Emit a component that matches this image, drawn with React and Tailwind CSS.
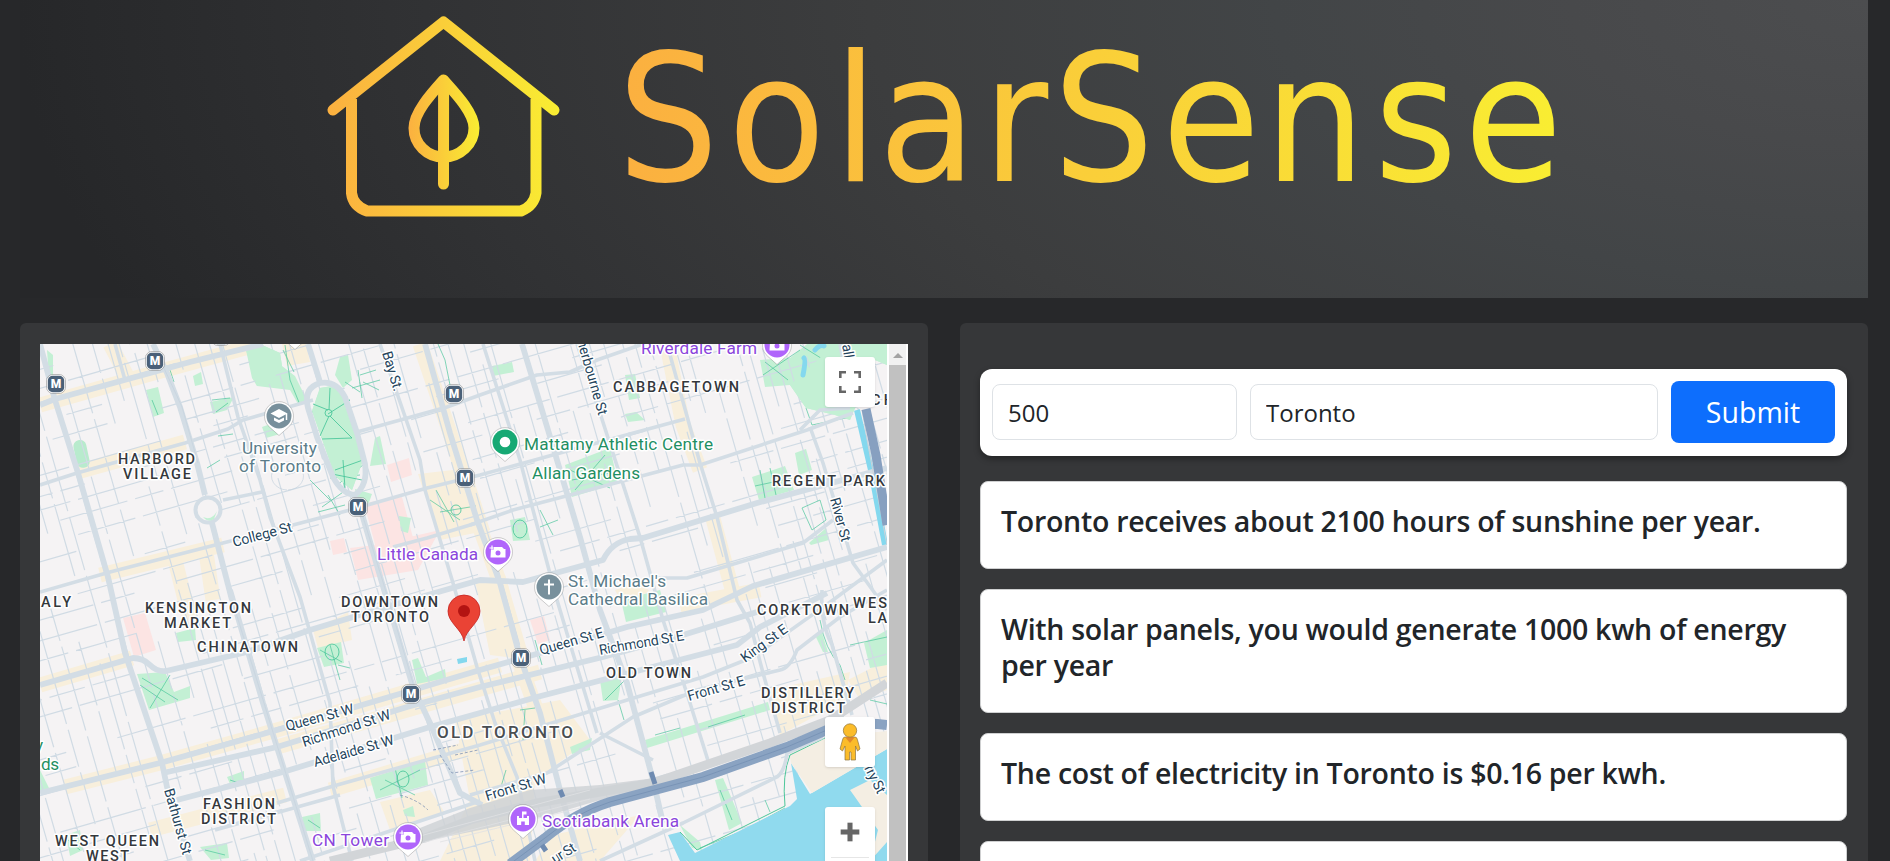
import { Plus } from 'lucide-react';

const facts = [
  'Toronto receives about 2100 hours of sunshine per year.',
  'With solar panels, you would generate 1000 kwh of energy per year',
  'The cost of electricity in Toronto is $0.16 per kwh.',
  'You would save $160 per year.',
];

// Wide arterial roads
const majorRoads = [
  'M40 405 L55 399 L150 373 L190 362 L263 344',
  'M40 344 L55 400 L78 473 L108 577 L125 653 L162 763 L167 787 L190 861',
  'M230 590 L263 703 L313 861',
  'M153 344 L167 373 L180 407 L197 463 L205 495',
  'M212 523 L232 600',
  'M308 344 L320 382',
  'M357 497 L387 600 L413 687 L430 723 L460 793 L482 805',
  'M320 383 Q303 388 308 408 L317 437 L333 477 Q342 494 355 495 Q368 485 365 464 L357 433 L345 397 Q336 380 320 383',
  'M425 344 L450 433 L477 520 L500 583 L520 657 L540 713 L560 790 L580 861',
  'M522 344 L548 430 L580 537 L600 610 L627 683 L653 780 L663 823',
  'M40 685 L133 658 Q143 658 150 665 Q157 672 166 671 L247 652 L310 630 L393 605 L480 580 L523 582 L603 560 Q612 542 630 539 L643 538 L757 503 L887 468',
  'M40 793 L160 763 L277 730 L413 690 L480 670 L540 653 L627 627 L703 610 L753 586 L887 547',
  'M163 773 L277 747 L407 707 L480 687 L603 657 L683 635 L757 612',
  'M177 800 L283 772 L430 727 L480 713 L537 697 L737 645 L760 627 L827 593',
];

// Secondary through streets
const midRoads = [
  'M380 344 L420 460 L425 490 L453 583 L477 667 L495 723 L517 777 L535 861',
  'M220 344 L238 417 L260 480 L270 517 L300 597 L330 703 L333 786 L352 861',
  'M483 344 L520 460 L533 510 L557 600 L580 677 L597 733',
  'M577 344 L600 413 L640 537 L663 620 L690 703 L710 767',
  'M667 344 L700 463 L717 517 L737 600 L750 623 L763 673 L780 733',
  'M810 427 L823 463 L853 563 L887 610',
  'M40 485 L77 473 L185 443 L228 429 L243 420 L313 400',
  'M357 432 L447 407 L480 395 L537 375 L570 372 L597 360 L643 344',
  'M40 592 L110 572 L223 543 L293 525 L350 510 L427 488 L480 475 L560 453 L685 419',
  'M470 525 L513 510 L570 495 L683 465 L700 465 L807 430 L853 413',
  'M393 547 L427 538 L480 522',
  'M650 578 L687 578 L803 543 L833 520',
  'M277 803 L330 787 L480 745 L637 697 L703 677 L753 657 L833 600 L887 560',
  'M470 795 L547 773 L633 717 L697 690 L780 670 Q790 668 797 650 L840 617 L887 590',
  'M600 861 L683 823 L777 777 Q785 771 787 753 L823 737',
  'M822 590 Q820 622 832 645 L852 715',
  'M600 733 L653 760',
  'M215 830 L340 795 M300 861 L480 801',
  'M223 500 L262 492 M800 430 L820 410 L850 408',
  'M115 344 L125 380 M840 344 L850 400',
];

const parks = [
  '246,350 262,345 280,353 282,366 295,376 307,400 298,404 290,390 257,386 252,378',
  '320,388 338,385 350,408 365,455 352,490 335,476 312,411',
  '146,390 158,387 164,413 153,417',
  '193,376 201,372 203,384 195,386',
  '210,402 234,397 227,410 213,414',
  '340,357 348,355 352,380 343,388 335,375',
  '262,427 276,422 280,434 266,438',
  '355,489 372,494 368,505 358,503',
  '375,438 380,436 386,464 370,466',
  '399,516 411,518 408,533 401,531',
  '565,465 610,448 618,483 572,497',
  '625,375 635,374 640,398 629,400',
  '492,366 512,362 514,372 493,376',
  '625,414 636,412 645,420 628,422',
  '752,477 785,466 794,490 759,500',
  '795,453 806,449 812,470 799,475',
  '809,543 826,528 829,540 811,545',
  '760,360 790,358 812,340 887,344 887,365 875,360 850,420 835,415 806,408 790,385 765,387',
  '510,520 525,517 530,540 513,541',
  '621,600 660,590 666,612 626,622',
  '137,674 165,672 174,692 190,686 190,698 149,710',
  '317,648 341,642 344,663 324,667',
  '370,778 425,761 428,785 376,799',
  '412,660 418,658 426,677 445,669 446,678 417,684',
  '600,680 622,676 618,700 603,701',
  '570,747 592,738 590,750 572,754',
  '645,740 768,702 770,710 647,748',
  '715,780 723,778 742,823 729,830',
  '864,643 887,630 887,665 870,668',
  '815,635 821,630 828,652 823,652',
  '302,817 320,813 321,831 305,831',
  '227,777 244,771 244,781 230,784',
  '200,847 227,843 229,858 211,860',
  '66,835 80,830 83,850 70,856',
  '40,770 50,790 40,793',
  '176,633 195,628 196,640 178,642',
  '680,825 700,842 702,850 692,848',
  '403,810 413,806 415,817 405,816',
  '47,350 53,355 53,380 49,378',
];

const commercial = [
  'M40 405 L150 374 L260 344',
  'M110 344 L128 378',
  'M77 472 L185 442',
  'M100 575 L223 545 M205 545 L213 600 M175 560 L190 620',
  'M420 344 L450 433 L477 520 L500 583 L515 650 L540 720',
  'M40 685 L132 658',
  'M65 787 L160 763 L277 730 L413 690 L500 665',
  'M668 350 L683 425 L700 470',
  'M712 515 L735 600',
  'M277 747 L400 712 L540 672',
  'M150 830 L285 795',
  'M330 790 L480 745 L560 722',
  'M680 605 L760 590',
];

const greenPaths = [
  'M318 398 L358 440 M312 412 L350 400 M322 438 L338 390 M337 412 L328 387 M337 412 L352 438',
  'M337 485 L363 465 M330 478 L360 475 M345 490 L340 465',
  'M285 345 L290 380 L300 405 M283 350 L294 372',
  'M345 382 L360 392 M358 370 L362 398 M352 388 L380 380 M363 382 L379 390 M360 375 L376 370',
  'M310 480 L330 500 M322 507 L346 490 M318 512 L345 505 M328 495 L340 515',
  'M212 400 L230 398 M216 412 L228 403 M218 436 L233 434 M207 468 L220 460',
  'M430 500 L460 520 M436 490 L454 522 M440 512 L476 506',
  'M570 470 L610 488 M575 490 L605 455 M572 480 L615 472',
  'M763 375 L800 350 M765 362 L788 380 M806 408 L812 425 L850 417 M800 345 L832 365',
  'M760 470 L765 498 M770 468 L776 495 M755 486 L792 478',
  'M802 508 L820 500 L826 520 L812 530 Z M540 510 L553 535 M540 527 L558 520',
  'M140 685 L165 702 M150 708 L170 675 M142 678 L178 700',
  'M320 650 L342 662 M330 645 L340 680 M338 665 L350 668',
  'M380 790 L420 770 M385 780 L415 795 M395 768 L402 798',
  'M605 700 L625 680 M618 700 L624 720 M655 735 L680 728 M708 727 L745 715',
  'M820 620 Q825 650 840 665 L845 680 M850 645 L887 637 M870 700 L887 704',
  'M700 848 L745 830 L785 808 M765 800 L770 812 M720 790 L732 820',
  'M520 710 L535 708 M525 710 L523 740 M535 640 L542 665 M506 770 L500 790',
  'M230 780 L242 784 M205 850 L225 855 M308 820 L320 828 M68 840 L80 850',
  'M438 344 L445 360 L450 385 M152 400 L158 415 M170 370 L174 382',
];

// Small residential streets, laid out on the tilted city grid
function buildStreets() {
  let seed = 11;
  const rand = () => {
    seed = (seed * 16807) % 2147483647;
    return seed / 2147483647;
  };
  let d = '';
  for (let x = -520; x < 520; x += 10 + rand() * 9) {
    let y = -420;
    while (y < 420) {
      const len = 28 + rand() * 75;
      if (rand() > 0.26) {
        d += `M${x.toFixed(1)} ${y.toFixed(1)} v${len.toFixed(1)} `;
      }
      y += len + 6;
    }
  }
  for (let y = -420; y < 420; y += 13 + rand() * 9) {
    let x = -520;
    while (x < 520) {
      const len = 20 + rand() * 70;
      if (rand() > 0.45) {
        d += `M${x.toFixed(1)} ${y.toFixed(1)} h${len.toFixed(1)} `;
      }
      x += len + 8;
    }
  }
  return d;
}

const streets = buildStreets();

const areas = [
  ['HARBORD', 118, 464, 77],
  ['VILLAGE', 123, 479, 68],
  ['CABBAGETOWN', 613, 392, 126],
  ['REGENT PARK', 772, 486, 113],
  ['KENSINGTON', 145, 613, 106],
  ['MARKET', 164, 628, 67],
  ['CHINATOWN', 197, 652, 101],
  ['DOWNTOWN', 341, 607, 97],
  ['TORONTO', 351, 622, 78],
  ['ALY', 41, 607, 30],
  ['FASHION', 203, 809, 72],
  ['DISTRICT', 201, 824, 75],
  ['WEST QUEEN', 55, 846, 104],
  ['WEST', 86, 861, 43],
  ['OLD TOWN', 606, 678, 85],
  ['CORKTOWN', 757, 615, 92],
  ['WES', 853, 608, 34],
  ['LA', 868, 623, 19],
  ['DISTILLERY', 761, 698, 93],
  ['DISTRICT', 771, 713, 74],
  ['CH', 871, 405, 23],
];

const places = [
  ['University', 242, 454, 75, '#5b7c89'],
  ['of Toronto', 239, 472, 82, '#5b7c89'],
  ["St. Michael's", 568, 587, 98, '#5b7c89'],
  ['Cathedral Basilica', 568, 605, 140, '#5b7c89'],
  ['Little Canada', 377, 560, 101, '#8b45dc'],
  ['Riverdale Farm', 641, 354, 116, '#8b45dc'],
  ['CN Tower', 312, 846, 77, '#8b45dc'],
  ['Scotiabank Arena', 542, 827, 137, '#8b45dc'],
  ['Mattamy Athletic Centre', 524, 450, 189, '#1f8f63'],
  ['Allan Gardens', 532, 479, 108, '#1f8f63'],
  ['y', 35, 751, 8, '#1f8f63'],
  ['ds', 41, 770, 18, '#1f8f63'],
];

const streetNames = [
  ['College St', 234, 547, 61, -15],
  ['Bay St.', 382, 353, 41, 73],
  ['herbourne St', 577, 341, 78, 74],
  ['River St', 830, 499, 45, 75],
  ['Queen St W', 287, 731, 70, -15],
  ['Richmond St W', 304, 747, 92, -18],
  ['Adelaide St W', 315, 767, 83, -16],
  ['Bathurst St', 164, 790, 68, 74],
  ['Queen St E', 541, 655, 66, -16],
  ['Richmond St E', 600, 655, 86, -10],
  ['King St E', 745, 663, 54, -36],
  ['Front St E', 689, 701, 59, -16],
  ['Front St W', 487, 801, 63, -17],
  ['rry St', 864, 768, 30, 63],
  ['ur St', 555, 864, 26, -32],
  ['all', 842, 345, 14, 80],
];

const stations = [[56, 384], [155, 361], [221, 336], [454, 394], [465, 478], [358, 507], [411, 694], [521, 658]];

function Pin({ x, y, color, children }) {
  return (
    <g transform={`translate(${x} ${y})`}>
      <path d="M0 19.5 L-9 11.5 A14.5 14.5 0 1 1 9 11.5 Z" fill="#fff" stroke="#00000030" strokeWidth="1" />
      <circle r="12.5" fill={color} />
      {children}
    </g>
  );
}

function Camera() {
  return (
    <g fill="#fff">
      <path d="M-7 -3 h3 l0 -2 h8 l2 2 h1.5 v8.5 h-15 z" />
      <circle cy="1" r="2.5" fill="#b065fb" />
      <path d="M-6 -6 v4 M-8 -4 h4" stroke="#b065fb" strokeWidth="2.4" />
      <path d="M-6 -6.5 v5 M-8.5 -4 h5" stroke="#fff" strokeWidth="1.2" />
    </g>
  );
}

function CityMap() {
  return (
    <svg viewBox="40 344 847 517" className="block h-[517px] w-[847px] shrink-0" fontFamily="Roboto, sans-serif">
      <rect x="40" y="344" width="847" height="517" fill="#f5f3f4" />

      {/* Land use */}
      <g fill="none" stroke="#f8efdc" strokeWidth="15">
        {commercial.map((d) => <path key={d} d={d} />)}
      </g>
      <g fill="#f8efdc">
        <path d="M282 344 L306 344 L310 362 L287 366 Z" />
        <path d="M418 474 L470 468 L490 530 L440 540 Z" />
        <path d="M475 580 L505 575 L530 660 L490 655 Z" />
        <path d="M313 630 L348 612 L352 640 L318 648 Z" />
        <path d="M455 720 L560 700 L590 740 L535 780 L530 861 L440 861 L470 800 Z" />
        <path d="M380 802 L430 790 L445 813 L390 830 Z" />
        <path d="M553 835 L640 815 L600 861 L535 861 Z" />
        <path d="M770 690 L850 672 L845 700 L780 735 Z" />
        <path d="M620 600 L615 590 L640 580 L650 592 Z" />
        <path d="M848 680 L887 660 L887 690 L860 700 Z" />
      </g>
      <g fill="#fce4e3">
        <path d="M364 503 L402 497 L415 545 L378 556 Z" />
        <path d="M387 465 L409 458 L412 475 L391 482 Z" />
        <path d="M350 548 L375 545 L440 530 L418 570 L358 580 Z" />
        <path d="M330 541 L344 538 L347 552 L333 555 Z" />
        <path d="M123 618 L145 613 L156 650 L134 657 Z" />
        <path d="M530 620 L544 616 L550 640 L538 644 Z" />
      </g>
      <g fill="#c3f0d4">
        {parks.map((p) => <polygon key={p} points={p} />)}
        <rect x="75" y="440" width="13" height="28" rx="6" transform="rotate(-12 81 454)" fill="#b8ebcd" />
      </g>

      {/* Streets */}
      <path d={streets} transform="translate(463 600) rotate(-16)" fill="none" stroke="#d0dbe4" strokeWidth="1.200" />
      <g fill="none" stroke="#3fc395" strokeWidth="0.8" opacity="0.8">
        {greenPaths.map((d) => <path key={d} d={d} />)}
      </g>
      <g fill="#c3f0d4">
        <polygon points="320,388 338,385 350,408 365,455 352,490 335,476 312,411" />
        <polygon points="246,350 262,345 280,353 282,366 270,384 257,386" />
        <polygon points="835,344 887,344 887,365 875,360 850,420 835,415 806,408 790,385" />
      </g>
      <g fill="none" stroke="#3fc395" strokeWidth="0.8">
        <path d="M313 404 L328 410 M328 414 L350 400 M330 388 L329 410 M329 416 L320 436 M330 416 L352 438 L322 439 M335 470 L363 460 M332 474 L362 480 M345 488 L343 460" />
        <circle cx="328.500" cy="413" r="3.500" />
        <circle cx="456" cy="510" r="5" />
        <ellipse cx="520" cy="529" rx="7" ry="9" />
        <ellipse cx="332" cy="652" rx="7" ry="8" />
        <ellipse cx="403" cy="779" rx="6" ry="8" />
      </g>

      {/* Lake and river */}
      <path d="M668 835 L680 861 L887 861 L887 749 L810 794 L791 763 L797 799 L790 806 L695 853 L680 832 Z" fill="#90daee" />
      <path d="M791 763 L789 752 L830 737 L887 731 L887 749 L812 793 Z" fill="#f4eee3" />
      <path d="M850 790 L870 780 L887 795 L887 842 L870 861 L878 830 L855 797 Z" fill="#f4eee3" />
      <path d="M680 832 L697 850 L785 806 Q782 775 790 755 L827 737" fill="none" stroke="#4dc79a" strokeWidth="1" />
      <path d="M857 410 L871 470 L885 545" fill="none" stroke="#84d8ee" strokeWidth="6" />
      <path d="M803 375 Q806 360 804 358 M815 350 Q820 344 824 346" fill="none" stroke="#84d8ee" strokeWidth="5" strokeLinecap="round" />
      <path d="M457 659 L467 657 L467 662 L458 664 Z" fill="#84d8ee" />

      <g fill="none" stroke="#d3dde5" strokeLinejoin="round">
        <g strokeWidth="3.600">
          {midRoads.map((d) => <path key={d} d={d} />)}
        </g>
        <g strokeWidth="5.800">
          {majorRoads.map((d) => <path key={d} d={d} />)}
        </g>
        <circle cx="208" cy="510" r="12.500" strokeWidth="4" fill="#f5f3f4" />
      </g>
      <path d="M203 517 Q212 521 217 511 L214 519 Q208 523 203 517" fill="#c3f0d4" />
      <g fill="none" stroke="#c5d2de" strokeWidth="0.7">
        <path d="M157 353 L182 407 L198 463 M360 507 L390 605 L415 690 M232 600 L313 861" />
        <path d="M380 480 a16 14 0 1 0 -1 0" transform="translate(-92 10)" />
      </g>

      {/* Rail corridor and expressway */}
      <path d="M330 861 L425 838 L470 820 L537 803 L653 783 L770 743 L830 720 L887 683" fill="none" stroke="#d2d5d8" strokeWidth="9" />
      <path d="M400 846 L420 828 L470 808 L530 790 L600 785 L655 778 L655 788 L600 800 L550 815 L480 830 Z" fill="#cfd2d6" opacity="0.85" />
      <path d="M420 836 L590 790 M425 842 L590 799 M440 842 L580 808" fill="none" stroke="#dfe1e3" strokeWidth="0.8" />
      <path d="M862 410 L868 445 L887 545" fill="none" stroke="#ccd3d9" strokeWidth="1" />
      <path d="M866 409 L876 455 L887 525" fill="none" stroke="#87a0c0" strokeWidth="9" />
      <path d="M510 864 L545 838 Q575 813 610 802 L703 777 L787 747 L827 730 Q857 721 887 725" fill="none" stroke="#8aa3c2" strokeWidth="10" />
      <path d="M510 864 L545 838 Q575 813 610 802 L703 777 L787 747 L827 730" fill="none" stroke="#7590b4" strokeWidth="0.8" />
      <path d="M560 790 L563 797 M651 772 L655 784 M542 845 L546 851" fill="none" stroke="#6f8bb1" strokeWidth="5" />
      <path d="M433 750 L458 745 M440 755 L452 773 L475 770 M455 755 L478 750 M400 795 Q418 800 428 810" fill="none" stroke="#7f93b5" strokeWidth="0.8" strokeDasharray="3 2" />

      {/* Labels */}
      <g stroke="#fff" strokeWidth="3" strokeLinejoin="round" paintOrder="stroke">
        <g fontSize="14.200" fill="#24445c">
          {streetNames.map(([name, x, y, w, angle]) => (
            <text key={name} transform={`translate(${x} ${y}) rotate(${angle})`} textLength={w}>{name}</text>
          ))}
        </g>
        <g fontSize="14.500" fontWeight="500" fill="#34383c">
          {areas.map(([name, x, y, w]) => (
            <text key={name + x} x={x} y={y} textLength={w}>{name}</text>
          ))}
        </g>
        <text x="437" y="738" fontSize="17" fontWeight="500" fill="#4a4e52" textLength="136">OLD TORONTO</text>
        <g fontSize="17.200">
          {places.map(([name, x, y, w, color]) => (
            <text key={name} x={x} y={y} textLength={w} fill={color}>{name}</text>
          ))}
        </g>
      </g>

      {stations.map(([x, y]) => (
        <g key={`${x}-${y}`}>
          <rect x={x - 9.500} y={y - 9.500} width="19" height="19" rx="6.500" fill="#fff" stroke="#00000040" />
          <rect x={x - 8.200} y={y - 8.200} width="16.400" height="16.400" rx="5" fill="#4a6078" />
          <text x={x} y={y + 4.200} fontSize="12" fontWeight="900" textAnchor="middle" fill="#fff">M</text>
        </g>
      ))}

      <Pin x={279} y={416} color="#78909c">
        <path d="M-8.500 -2.500 L0 -7 L8.500 -2.500 L0 2 Z M-5 1.500 L0 4 L5 1.500 V4.500 L0 7 L-5 4.500 Z" fill="#fff" />
        <path d="M7.500 -2.500 V4" stroke="#fff" strokeWidth="1.500" />
      </Pin>
      <Pin x={295} y={330} color="#78909c" />
      <Pin x={505} y={442} color="#17a974"><circle r="5.300" fill="#fff" /></Pin>
      <Pin x={549} y={587} color="#78909c">
        <path d="M0 -7.500 V7.500 M-5 -2.500 H5" stroke="#fff" strokeWidth="2" />
      </Pin>
      <Pin x={498} y={552} color="#b065fb"><Camera /></Pin>
      <Pin x={777} y={345} color="#b065fb"><Camera /></Pin>
      <Pin x={408} y={837} color="#b065fb"><Camera /></Pin>
      <Pin x={523} y={819} color="#b065fb">
        <path d="M-6 6 V-3 H-4 V-1 H-1 V-7.500 H3.500 V-4.500 H0.500 V-1 H4 V-3 H6 V6 H1.800 V2.500 H-1.800 V6 Z" fill="#fff" />
      </Pin>

      <path d="M464 641 C462 629 448 623 448 611 A16 16 0 0 1 480 611 C480 623 466 629 464 641 Z" fill="#ea4335" stroke="#c5221f" strokeWidth="0.8" />
      <circle cx="464" cy="611" r="6" fill="#b31412" />
    </svg>
  );
}

function MapControls() {
  return (
    <>
      <button className="absolute top-[13px] left-[785px] flex h-[50px] w-[50px] items-center justify-center rounded-[3px] bg-white shadow">
        <svg viewBox="0 0 22 22" className="h-[22px] w-[22px]" fill="none" stroke="#666" strokeWidth="2.600">
          <path d="M1.300 7 V1.300 H7 M15 1.300 H20.700 V7 M20.700 15 V20.700 H15 M7 20.700 H1.300 V15" />
        </svg>
      </button>
      <button className="absolute top-[373px] left-[785px] flex h-[50px] w-[50px] items-center justify-center rounded-[3px] bg-white shadow">
        <svg viewBox="0 0 22 38" className="h-[38px] w-[22px]" fill="#fbbc2a" stroke="#8d7440" strokeWidth="0.7">
          <path d="M6 14 H16 Q18 14 18.500 17 L21 26 L18.500 28 L16.500 23 V37 H12 V29 H10.500 V37 H6 V23 L3.500 28 L1 26 L3.500 17 Q4 14 6 14 Z" />
          <path d="M6 14 H16 L11 20 Z" fill="#e2882b" stroke="none" />
          <circle cx="11" cy="7.500" r="6.700" />
        </svg>
      </button>
      <div className="absolute top-[463px] left-[785px] h-[101px] w-[50px] rounded-[3px] bg-white shadow">
        <div className="mx-1.5 flex h-[51px] items-center justify-center border-b border-[#e6e6e6]">
          <Plus className="h-[32px] w-[32px] text-[#666]" strokeWidth={3.8} strokeLinecap="butt" />
        </div>
      </div>
    </>
  );
}

function Banner() {
  return (
    <header className="mr-[22px] ml-5 h-[298px] bg-[radial-gradient(ellipse_1850px_900px_at_top_right,#4c4d4f_0%,#48494b_16%,#424547_32%,#3c3d3e_54%,#313234_78%,#262729_100%)]">
      <svg viewBox="20 0 1848 298" className="block h-[298px] w-[1848px]">
        <defs>
          <linearGradient id="house" gradientUnits="userSpaceOnUse" x1="328" y1="0" x2="560" y2="0">
            <stop offset="0" stopColor="#fbb040" />
            <stop offset="1" stopColor="#f9ed32" />
          </linearGradient>
          <linearGradient id="leaf" gradientUnits="userSpaceOnUse" x1="408" y1="0" x2="480" y2="0">
            <stop offset="0" stopColor="#fbb040" />
            <stop offset="1" stopColor="#f9ed32" />
          </linearGradient>
          <linearGradient id="word" gradientUnits="userSpaceOnUse" x1="695" y1="0" x2="1727" y2="0">
            <stop offset="0" stopColor="#fbb040" />
            <stop offset="1" stopColor="#f9ed32" />
          </linearGradient>
        </defs>
        <g fill="none" stroke="url(#house)" strokeWidth="11" strokeLinecap="round" strokeLinejoin="round">
          <path d="M333 110 L443.500 22 L554 110" />
          <path d="M351.500 99 V193 Q353 206 367 211 H521 Q534 206 536 193 V99" strokeLinecap="butt" />
        </g>
        <g fill="none" stroke="url(#leaf)" strokeWidth="11" strokeLinecap="round" strokeLinejoin="round">
          <path d="M443.500 80 C430 95 414 113 414 128 C414 144 427 157 443.500 157 C460 157 474 144 474 128 C474 113 457 95 443.500 80 Z" />
          <path d="M443.600 84 L443.500 184" />
        </g>
        <text
          transform="scale(.9 1)"
          x="686 809 926 976 1092 1170 1291 1405 1527 1627"
          y="181.500"
          fontFamily="DejaVu Sans"
          fontSize="177"
          fill="url(#word)"
        >
          SolarSense
        </text>
      </svg>
    </header>
  );
}

export default function App() {
  return (
    <div className="h-[861px] overflow-hidden bg-[#27282a] font-['Open_Sans','Noto_Sans',sans-serif] text-[#212529]">
      <Banner />

      <main className="mt-[25px] mr-[22px] ml-5 grid grid-cols-[908px_908px] justify-between">
        <section className="h-[600px] rounded-md bg-[#363739] px-5 pt-[21px]">
          <div className="relative flex w-[868px] bg-white">
            <CityMap />
            <MapControls />
            <div className="ml-0.5 flex h-[517px] w-[17px] flex-col items-center bg-[#f1f1f1]">
              <div className="mt-[9px] mb-[7px] h-0 w-0 border-x-[5px] border-b-[5px] border-x-transparent border-b-[#a3a3a3]" />
              <div className="w-[17px] flex-1 bg-[#c1c1c1]" />
            </div>
          </div>
        </section>

        <section className="h-[600px] rounded-md bg-[#363739] pt-[46px] pr-[21px] pl-5">
          <form className="mb-[25px] flex h-[87px] items-center gap-[13px] rounded-xl bg-white px-3 shadow-[0_3px_6px_rgba(0,0,0,0.35)]">
            <input
              defaultValue="500"
              className="mb-0.5 h-[56px] w-[245px] rounded-lg border border-[#dee2e6] px-[15px] pt-0.5 text-[24px]"
            />
            <input
              defaultValue="Toronto"
              className="mb-0.5 h-[56px] w-[408px] rounded-lg border border-[#dee2e6] px-[15px] pt-0.5 text-[24px]"
            />
            <button type="button" className="mb-[2px] h-[62px] flex-1 rounded-lg bg-[#0d6efd] pt-0.5 text-[28.5px] text-white">
              Submit
            </button>
          </form>

          {facts.map((fact) => (
            <div key={fact} className="mb-5 rounded-lg border border-[#cfd0d1] bg-white px-5 pt-[21px] pb-[29px]">
              <h5 className="text-[28.5px] leading-[36px] font-semibold tracking-[-0.28px]">{fact}</h5>
            </div>
          ))}
        </section>
      </main>
    </div>
  );
}
